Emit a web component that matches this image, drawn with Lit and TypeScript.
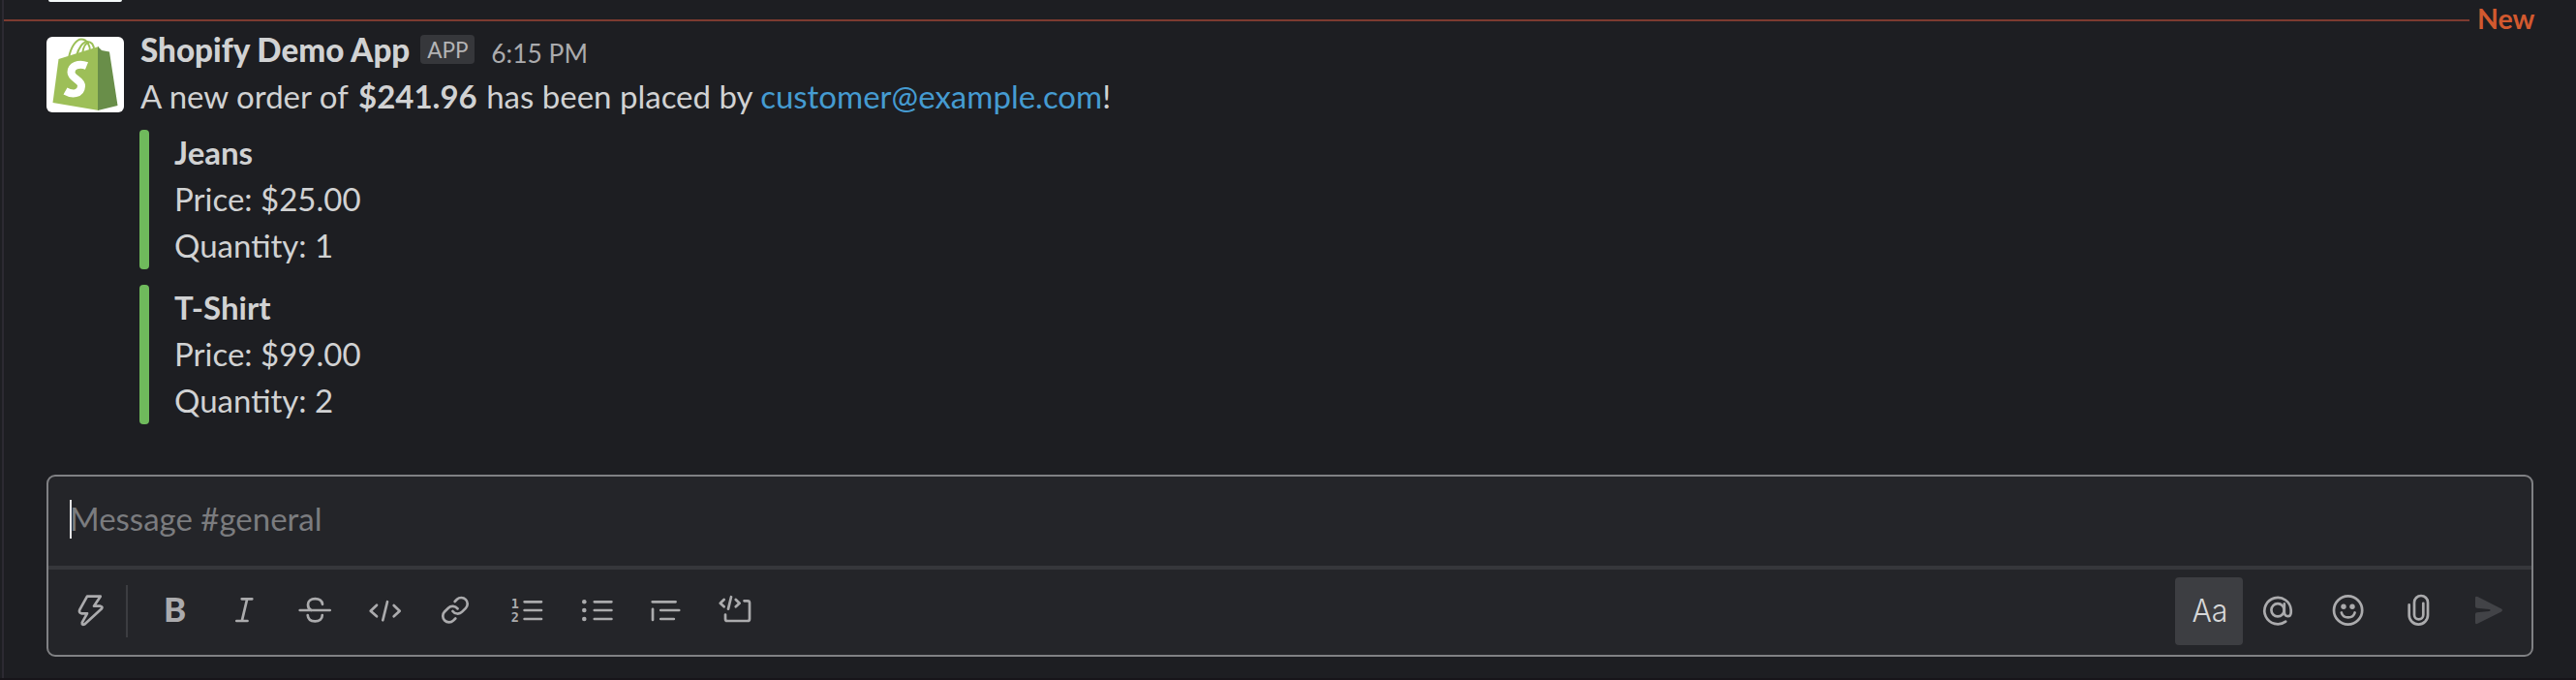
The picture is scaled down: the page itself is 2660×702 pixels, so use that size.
import { LitElement, html, svg, css } from "lit";
import { customElement, property } from "lit/decorators.js";

const icons: Record<string, unknown> = {
  bolt: svg`<path d="M-4-15.3H9.7L3-5.3H9.6Q12.6-4.6 10.8-2.4L-6.4 13.2Q-9.6 15-9.2 11.6L-4 2.3H-10Q-12.8 1.6-11.8-1.4Z"/>`,
  bold: svg`<text class="bold" x="-12" y="11">B</text>`,
  italic: svg`<path d="M-3.3-12.7H7.3M-8.7 10H2.5M2.2-12.7L-3.2 10"/>`,
  strike: svg`<path d="M-15.3-1H15.7M8-7.2C7.4-11 4.4-12.8.4-12.8C-4-12.8-7-10.4-7-6.8C-7-4.2-5.6-2-3.6-1M-7.3 4C-7 8 -4 10.4.3 10.4C4.8 10.4 7.8 8 7.8 4"/>`,
  code: svg`<path d="M-8-6.3L-14.3-.3L-8 5.3M3-9.8L-1.7 9.3M9.7-6L15.7-.3L9.7 5.3"/>`,
  link: svg`<g transform="translate(1 -1.3) scale(1.28) translate(-12 -12)"><path stroke-width="2.1" d="M10 13a5 5 0 0 0 7.54.54l3-3a5 5 0 0 0-7.07-7.07l-1.72 1.71M14 11a5 5 0 0 0-7.54-.54l-3 3a5 5 0 0 0 7.07 7.07l1.71-1.71"/></g>`,
  ordered: svg`<text class="num" x="-13.2" y="-3">1</text><text class="num" x="-13.2" y="11">2</text><path d="M.6-9.7H18M.6-1H18M.6 8H18"/>`,
  bullets: svg`<g class="dots"><circle cx="-9.7" cy="-9.7" r="2.3"/><circle cx="-9.7" cy="-1" r="2.3"/><circle cx="-9.7" cy="8" r="2.3"/></g><path d="M.8-9.7H18.4M.8-1H18.4M.8 8H18.4"/>`,
  quote: svg`<path d="M-11.3-9.7H12.6M-11-2.2V9M-2.8-1H16.2M-2.8 8H10.8"/>`,
  block: svg`<path d="M-9.4-12L-13.2-8.3L-9.4-4.7M-2-14.8L-5-2.4M2.8-12L6.6-8.3L2.8-4.7M11.5-10.7H15Q17-10.7 17-8.7V8Q17 10 15 10H-6Q-8 10-8 8V3.6"/>`,
  format: svg`<text class="aa" x="-17.500" y="11" textLength="37" lengthAdjust="spacingAndGlyphs">Aa</text>`,
  mention: svg`<path d="M7.2 10.6A13.7 13.7 0 1 1 12.7-1.3V1C12.7 6.6 5.8 6.6 5.8 1V-7.6"/><circle cx="-1" cy="-1.2" r="6.6"/>`,
  emoji: svg`<circle cx="-.4" cy="-1" r="14.6"/><g class="dots"><circle cx="-5" cy="-4.7" r="2.7"/><circle cx="4" cy="-4.7" r="2.7"/></g><path d="M-7.2 1.5C-5.4 8 4.8 8 6.6 1.5"/>`,
  clip: svg`<path d="M-9.3-6.6V4A9.65 9.65 0 0 0 10 4V-9A7 7 0 0 0-4-9V3.8A4.65 4.65 0 0 0 5.3 3.8V-8.2"/>`,
  send: svg`<path class="send" d="M-13-14Q-13-16-10.6-15L14-2.4Q16-1 14 .4L-10.6 12.8Q-13 13.8-13 11.8V3Q-13 1.4-11.4 1.2L1.4 0Q4-1 1.4-2L-11.4-3.2Q-13-3.4-13-5Z"/>`,
};

@customElement("tool-button")
class ToolButton extends LitElement {
  @property() name = "";
  static styles = css`
    :host { display: block; width: 70px; height: 70px; border-radius: 4px; color: #ababad; }
    :host([active]) { background: #3d3e42; color: #d6d7d8; }
    svg { display: block; width: 70px; height: 70px; fill: none; stroke: currentColor; stroke-width: 2.7; stroke-linecap: round; stroke-linejoin: round; }
    text { fill: currentColor; stroke: none; }
    .dots { fill: currentColor; stroke: none; }
    .bold { font: 900 35px Lato, sans-serif; }
    .num { font: 700 13.5px "DejaVu Sans Mono", monospace; }
    .aa { font: 300 33px Inter, sans-serif; }
    .send { fill: #424347; stroke: none; }
  `;
  render() {
    return html`<svg viewBox="-35 -35 70 70">${icons[this.name]}</svg>`;
  }
}

@customElement("order-item")
class OrderItem extends LitElement {
  @property() name = "";
  @property() price = "";
  @property() quantity = "";
  static styles = css`
    :host { display: flex; height: 144px; gap: 26px; }
    .bar { width: 10px; border-radius: 4px; background: #6fba5c; }
    .text { line-height: 48px; margin-top: -1px; }
    b { font-weight: 700; }
  `;
  render() {
    return html`<div class="bar"></div>
      <div class="text">
        <b>${this.name}</b>
        <div>Price: ${this.price}</div>
        <div>Quantity: ${this.quantity}</div>
      </div>`;
  }
}

@customElement("app-root")
class AppRoot extends LitElement {
  static styles = css`
    :host { display: block; box-sizing: border-box; height: 702px; overflow: hidden; background: #1d1e22; border-bottom: 2px solid #17151a; padding-left: 2px; font: 400 33px/48px Lato, sans-serif; color: #d1d2d3; }
    .pane { height: 700px; border-left: 2px solid #2c2a32; display: flex; flex-direction: column; }
    .previous { width: 76px; height: 2px; margin-left: 46px; background: #f3f8f8; border-radius: 0 0 6px 6px; flex: none; }
    .divider { display: flex; align-items: center; height: 38px; margin-top: -1px; padding-right: 43px; flex: none; }
    .rule { flex: 1; height: 2px; margin-top: 2px; background: #7d3b30; }
    .new { width: 67px; box-sizing: border-box; padding-left: 8px; font-size: 28.5px; font-weight: 700; color: #d2592f; line-height: 36px; margin-top: -3px; }
    .message { display: flex; margin-top: -1px; padding-left: 44px; gap: 17px; height: 400px; flex: none; }
    .avatar { width: 80px; height: 78px; border-radius: 6px; background: #fff; flex: none; }
    .head { display: flex; height: 30px; margin-top: -2px; align-items: center; }
    .name { font-weight: 900; font-size: 33.2px; }
    .badge { width: 56px; height: 30px; margin-left: 11px; border-radius: 4px; background: #36373b; color: #b4b4b6; font-size: 22.5px; line-height: 31px; text-align: center; }
    .time { margin: 7px 0 0 17px; font-size: 26.4px; color: #ababad; }
    .line { margin-top: 9px; white-space: pre; }
    .line b { font-weight: 700; margin: 0 1px 0 2.5px; }
    .link { color: #459bd1; }
    .items { display: grid; gap: 16px; margin: 11px 0 0 -1px; }
    .composer { box-sizing: border-box; width: 2568px; height: 188px; margin: 52px 0 0 44px; border: 2px solid #808184; border-radius: 9px; background: #242529; flex: none; }
    .input { display: flex; align-items: center; height: 92px; padding-left: 22px; box-sizing: border-box; color: #7b7c7f; }
    .caret { width: 2px; height: 40px; margin-top: -4px; background: #e4e4e5; }
    .placeholder { margin: -7px 0 0 -2px; }
    .tools { display: flex; gap: 2px; border-top: 4px solid #36373b; padding: 8px 10px 0 9px; }
    .sep { width: 2px; height: 54px; margin: 8px 12px 0 -1px; background: #3c3d41; }
    .space { flex: 1; }
  `;
  render() {
    const left = ["bold", "italic", "strike", "code", "link", "ordered", "bullets", "quote", "block"];
    const right = ["mention", "emoji", "clip", "send"];
    return html`
      <div class="pane">
        <div class="previous"></div>
        <div class="divider"><div class="rule"></div><div class="new">New</div></div>
        <div class="message">
          <svg class="avatar" viewBox="0 0 80 78">
            <g fill="none" stroke="#9bbf56" stroke-width="2">
              <path d="M23 22C25 10 31 2.5 36 2.5C42 2.5 45 9 45 15" />
              <path d="M31 20C33 11 38 5 42 5C47 5 49 9 49 14" />
              <path d="M37 18C38 10 41 6 44 6" />
            </g>
            <path fill="#9dbf58" d="M12.5 23L54 10V76L6.5 68Z" />
            <path fill="#698e49" d="M53 10L57 14L65 15.5L73.5 71L53 76Z" />
            <path fill="none" stroke="#fff" stroke-width="8" d="M41.500 30C33 26.500 25.500 30.500 25.500 36.500C25.500 43.500 36.500 44 36 51C35.500 59.500 26.500 60 19.500 56" />
          </svg>
          <div>
            <div class="head"><span class="name">Shopify Demo App</span><span class="badge">APP</span><span class="time">6:15 PM</span></div>
            <div class="line">A new order of <b>$241.96</b> has been placed by <span class="link">customer@example.com</span>!</div>
            <div class="items">
              <order-item name="Jeans" price="$25.00" quantity="1"></order-item>
              <order-item name="T-Shirt" price="$99.00" quantity="2"></order-item>
            </div>
          </div>
        </div>
        <div class="composer">
          <div class="input"><div class="caret"></div><div class="placeholder">Message #general</div></div>
          <div class="tools">
            <tool-button name="bolt"></tool-button>
            <div class="sep"></div>
            ${left.map((n) => html`<tool-button name=${n}></tool-button>`)}
            <div class="space"></div>
            <tool-button name="format" active></tool-button>
            ${right.map((n) => html`<tool-button name=${n}></tool-button>`)}
          </div>
        </div>
      </div>
    `;
  }
}
